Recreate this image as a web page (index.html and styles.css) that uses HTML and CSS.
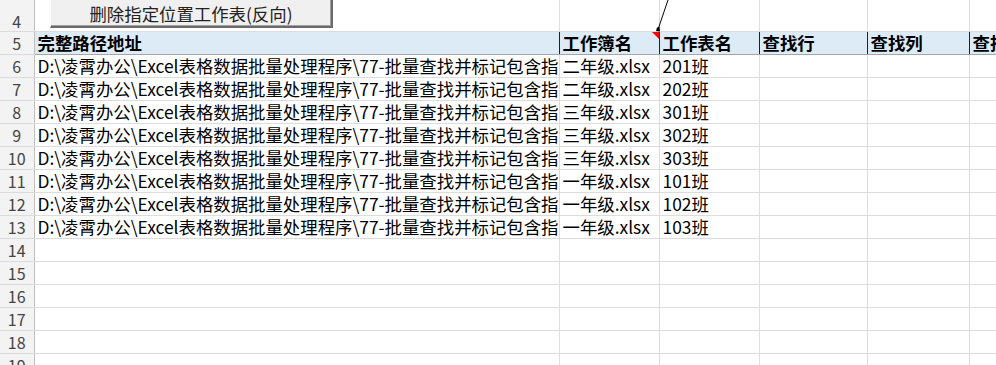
FILE: index.html
```html
<!DOCTYPE html>
<html lang="zh-CN">
<head>
    <meta charset="UTF-8">
    <title>批量查找并标记</title>
    <link rel="stylesheet" href="styles.css">
</head>
<body>
    <!-- 表格区域 -->
    <div class="sheet">
        <table class="grid">
            <colgroup>
                <col class="col-rh">
                <col class="col-a">
                <col class="col-b">
                <col class="col-c">
                <col class="col-d">
                <col class="col-e">
                <col class="col-f">
            </colgroup>
            <tr class="row-4">
                <td class="rh">4</td><td></td><td></td><td></td><td></td><td></td><td></td>
            </tr>
            <tr class="head-row">
                <td class="rh">5</td>
                <td>完整路径地址</td>
                <td class="has-note">工作簿名<span class="note-mark"></span></td>
                <td>工作表名</td>
                <td>查找行</td>
                <td>查找列</td>
                <td>查找</td>
            </tr>
            <tr><td class="rh">6</td><td>D:\凌霄办公\Excel表格数据批量处理程序\77-批量查找并标记包含指定内容的单元格</td><td>二年级.xlsx</td><td>201班</td><td></td><td></td><td></td></tr>
            <tr><td class="rh">7</td><td>D:\凌霄办公\Excel表格数据批量处理程序\77-批量查找并标记包含指定内容的单元格</td><td>二年级.xlsx</td><td>202班</td><td></td><td></td><td></td></tr>
            <tr><td class="rh">8</td><td>D:\凌霄办公\Excel表格数据批量处理程序\77-批量查找并标记包含指定内容的单元格</td><td>三年级.xlsx</td><td>301班</td><td></td><td></td><td></td></tr>
            <tr><td class="rh">9</td><td>D:\凌霄办公\Excel表格数据批量处理程序\77-批量查找并标记包含指定内容的单元格</td><td>三年级.xlsx</td><td>302班</td><td></td><td></td><td></td></tr>
            <tr><td class="rh">10</td><td>D:\凌霄办公\Excel表格数据批量处理程序\77-批量查找并标记包含指定内容的单元格</td><td>三年级.xlsx</td><td>303班</td><td></td><td></td><td></td></tr>
            <tr><td class="rh">11</td><td>D:\凌霄办公\Excel表格数据批量处理程序\77-批量查找并标记包含指定内容的单元格</td><td>一年级.xlsx</td><td>101班</td><td></td><td></td><td></td></tr>
            <tr><td class="rh">12</td><td>D:\凌霄办公\Excel表格数据批量处理程序\77-批量查找并标记包含指定内容的单元格</td><td>一年级.xlsx</td><td>102班</td><td></td><td></td><td></td></tr>
            <tr><td class="rh">13</td><td>D:\凌霄办公\Excel表格数据批量处理程序\77-批量查找并标记包含指定内容的单元格</td><td>一年级.xlsx</td><td>103班</td><td></td><td></td><td></td></tr>
            <tr><td class="rh">14</td><td></td><td></td><td></td><td></td><td></td><td></td></tr>
            <tr><td class="rh">15</td><td></td><td></td><td></td><td></td><td></td><td></td></tr>
            <tr><td class="rh">16</td><td></td><td></td><td></td><td></td><td></td><td></td></tr>
            <tr><td class="rh">17</td><td></td><td></td><td></td><td></td><td></td><td></td></tr>
            <tr><td class="rh">18</td><td></td><td></td><td></td><td></td><td></td><td></td></tr>
            <tr><td class="rh">19</td><td></td><td></td><td></td><td></td><td></td><td></td></tr>
        </table>

        <!-- 浮动按钮 -->
        <button class="sheet-btn">删除指定位置工作表(反向)</button>

        <!-- 批注箭头 -->
        <svg class="note-arrow" width="20" height="34" viewBox="0 0 20 34">
            <line x1="14" y1="0" x2="4.5" y2="28" stroke="#000" stroke-width="1"/>
            <polygon points="2,31 6,31.5 5.5,27 3,27.5" fill="#000"/>
        </svg>
    </div>
</body>
</html>
```

FILE: styles.css
```css
* { margin: 0; padding: 0; box-sizing: border-box; }
html, body { width: 996px; height: 365px; overflow: hidden; background: #fff; }
body { font-family: "Noto Sans CJK SC", "Noto Sans", sans-serif; color: #000; }

/* 表格 */
.sheet { position: relative; width: 996px; height: 365px; overflow: hidden; }
.grid { border-collapse: collapse; table-layout: fixed; width: 1028px; }
.col-rh { width: 34px; }
.col-a { width: 525px; }
.col-b { width: 100px; }
.col-c { width: 100px; }
.col-d { width: 108px; }
.col-e { width: 102px; }
.col-f { width: 59px; }

.grid td {
    height: 23px;
    border-right: 1px solid #dcdcdc;
    border-bottom: 1px solid #dcdcdc;
    font-size: 17.4px;
    line-height: 20px;
    padding: 0 3px;
    white-space: nowrap;
    overflow: hidden;
    vertical-align: middle;
}

/* 行号 */
.grid td.rh {
    background: #f3f3f3;
    color: #444;
    text-align: center;
    font-size: 16px;
    padding: 0;
    border-right: 1px solid #c0c0c0;
    border-bottom: 1px solid #dcdcdc;
}

.row-4 td { height: 31px; vertical-align: bottom; padding-bottom: 2px; }

/* 标题行 */
.head-row td {
    background: #ddebf7;
    font-weight: 700;
    border-top: 1px solid #000;
    border-right: 1px solid #222;
    border-bottom: 1px solid #a6a6a6;
}
.head-row td.rh { background: #f3f3f3; font-weight: 400; border-top: 1px solid #dcdcdc; border-right: 1px solid #c0c0c0; }

.has-note { position: relative; }
.note-mark {
    position: absolute;
    top: 0;
    right: 0;
    width: 0;
    height: 0;
    border-top: 7px solid #ff0000;
    border-left: 7px solid transparent;
}

/* 按钮 */
.sheet-btn {
    position: absolute;
    left: 50px;
    top: -6px;
    width: 283px;
    height: 34px;
    padding-top: 6px;
    background: #f0f0f0;
    border-top: 1px solid #fff;
    border-left: 1px solid #fff;
    border-right: 2px solid #6a6a6a;
    border-bottom: 2px solid #6a6a6a;
    box-shadow: inset -1px -1px 0 #a0a0a0;
    font-family: "Noto Sans CJK SC", sans-serif;
    font-size: 17.4px;
    color: #222;
}

.note-arrow { position: absolute; left: 654px; top: 0; }
```
